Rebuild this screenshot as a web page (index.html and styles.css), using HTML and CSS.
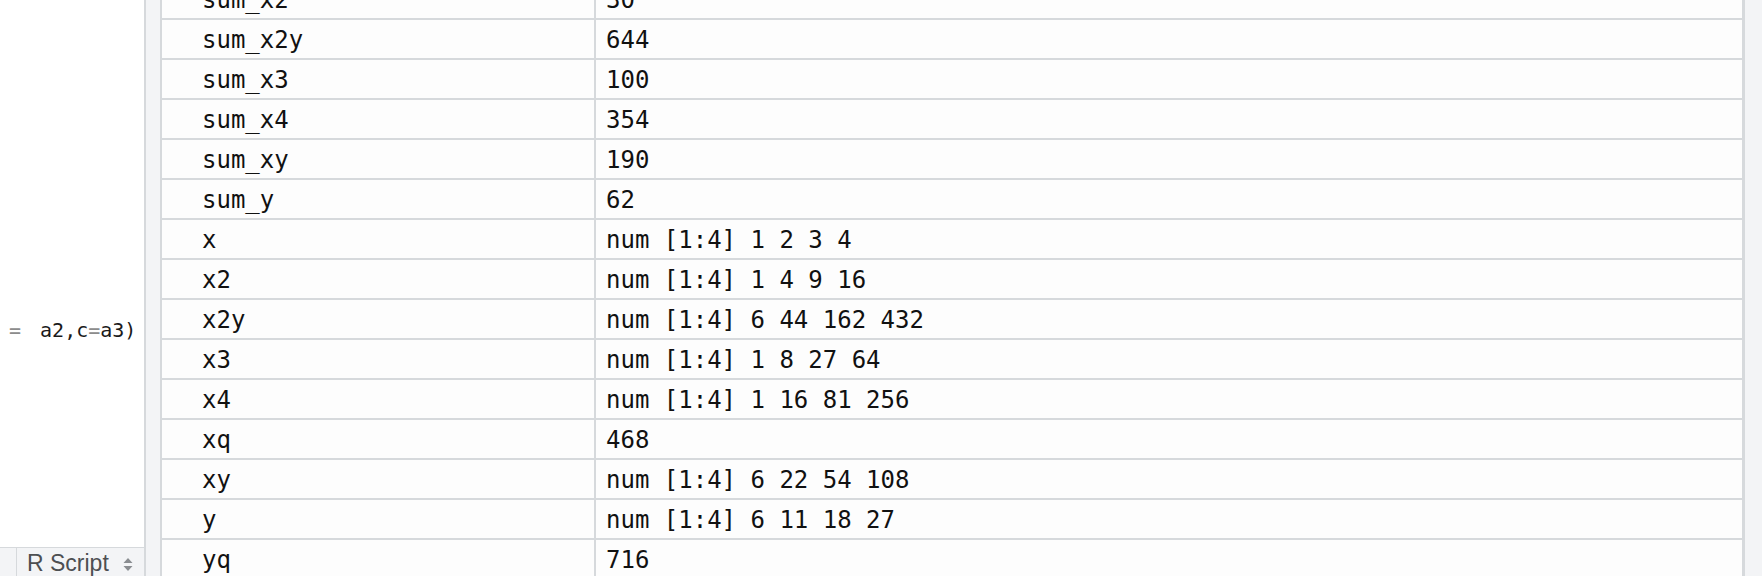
FILE: index.html
```html
<!DOCTYPE html>
<html lang="en">
<head>
    <meta charset="UTF-8">
    <title>Environment</title>
    <link rel="stylesheet" href="styles.css">
</head>
<body>
    <div class="editor">
        <div class="code">
            <div class="code-line"><span class="op lead">=</span>a2,c<span class="op">=</span>a3)</div>
        </div>
        <div class="status-bar">
            <div class="status-cell"></div>
            <div class="file-type">
                R Script
                <svg class="updown" width="10" height="13" viewBox="0 0 10 13">
                    <path d="M5 0 L9.5 5 L0.5 5 Z" fill="#8a8d91"/>
                    <path d="M5 13 L9.5 8 L0.5 8 Z" fill="#8a8d91"/>
                </svg>
            </div>
        </div>
    </div>
    <div class="gutter"></div>
    <div class="env">
        <table class="env-table">
            <tbody>
                <tr><td class="name">sum_x2</td><td class="value">30</td></tr>
                <tr><td class="name">sum_x2y</td><td class="value">644</td></tr>
                <tr><td class="name">sum_x3</td><td class="value">100</td></tr>
                <tr><td class="name">sum_x4</td><td class="value">354</td></tr>
                <tr><td class="name">sum_xy</td><td class="value">190</td></tr>
                <tr><td class="name">sum_y</td><td class="value">62</td></tr>
                <tr><td class="name">x</td><td class="value">num [1:4] 1 2 3 4</td></tr>
                <tr><td class="name">x2</td><td class="value">num [1:4] 1 4 9 16</td></tr>
                <tr><td class="name">x2y</td><td class="value">num [1:4] 6 44 162 432</td></tr>
                <tr><td class="name">x3</td><td class="value">num [1:4] 1 8 27 64</td></tr>
                <tr><td class="name">x4</td><td class="value">num [1:4] 1 16 81 256</td></tr>
                <tr><td class="name">xq</td><td class="value">468</td></tr>
                <tr><td class="name">xy</td><td class="value">num [1:4] 6 22 54 108</td></tr>
                <tr><td class="name">y</td><td class="value">num [1:4] 6 11 18 27</td></tr>
                <tr><td class="name">yq</td><td class="value">716</td></tr>
            </tbody>
        </table>
    </div>
    <div class="scrollbar"></div>
</body>
</html>
```

FILE: styles.css
```css
body {
    margin: 0;
    height: 576px;
    overflow: hidden;
    display: flex;
    background-color: #ffffff;
    font-family: "DejaVu Sans Mono", monospace;
    color: #111111;
}
.editor {
    width: 144px;
    flex-shrink: 0;
    display: flex;
    flex-direction: column;
    border-right: 2px solid #d6d9dc;
    overflow: hidden;
}
.code {
    flex: 1;
    padding-top: 318px;
    padding-left: 9px;
    overflow: hidden;
}
.code-line {
    font-size: 20px;
    line-height: 24px;
    white-space: pre;
    color: #1a1a1a;
}
.code-line .op {
    color: #8c8c8c;
}
.code-line .lead {
    margin-right: 19px;
}
.status-bar {
    height: 28px;
    flex-shrink: 0;
    display: flex;
    background-color: #f3f4f6;
    border-top: 1px solid #d6d9dc;
    overflow: hidden;
}
.status-cell {
    width: 16px;
    border-right: 1px solid #d6d9dc;
}
.file-type {
    display: flex;
    align-items: flex-start;
    gap: 14px;
    padding-top: 3px;
    padding-left: 10px;
    font-family: "Liberation Sans", Arial, sans-serif;
    font-size: 23px;
    line-height: 25px;
    color: #4d4f52;
    white-space: nowrap;
}
.updown {
    margin-top: 7px;
}
.gutter {
    width: 14px;
    flex-shrink: 0;
    background-color: #f3f4f6;
    border-right: 2px solid #d6d9dc;
}
.env {
    width: 1580px;
    flex-shrink: 0;
    overflow: hidden;
    background-color: #fdfdfd;
}
.env-table {
    width: 100%;
    table-layout: fixed;
    border-collapse: separate;
    border-spacing: 0;
    margin-top: -20px;
    font-size: 24px;
}
.env-table td {
    height: 36px;
    padding: 2px 0 0;
    line-height: 36px;
    border-bottom: 2px solid #d6d9dc;
    vertical-align: top;
    white-space: pre;
}
.env-table .name {
    width: 392px;
    padding-left: 40px;
    border-right: 2px solid #d6d9dc;
}
.env-table .value {
    padding-left: 10px;
}
.scrollbar {
    flex: 1;
    background-color: #f3f4f6;
    border-left: 3px solid #d6d9dc;
}
```
